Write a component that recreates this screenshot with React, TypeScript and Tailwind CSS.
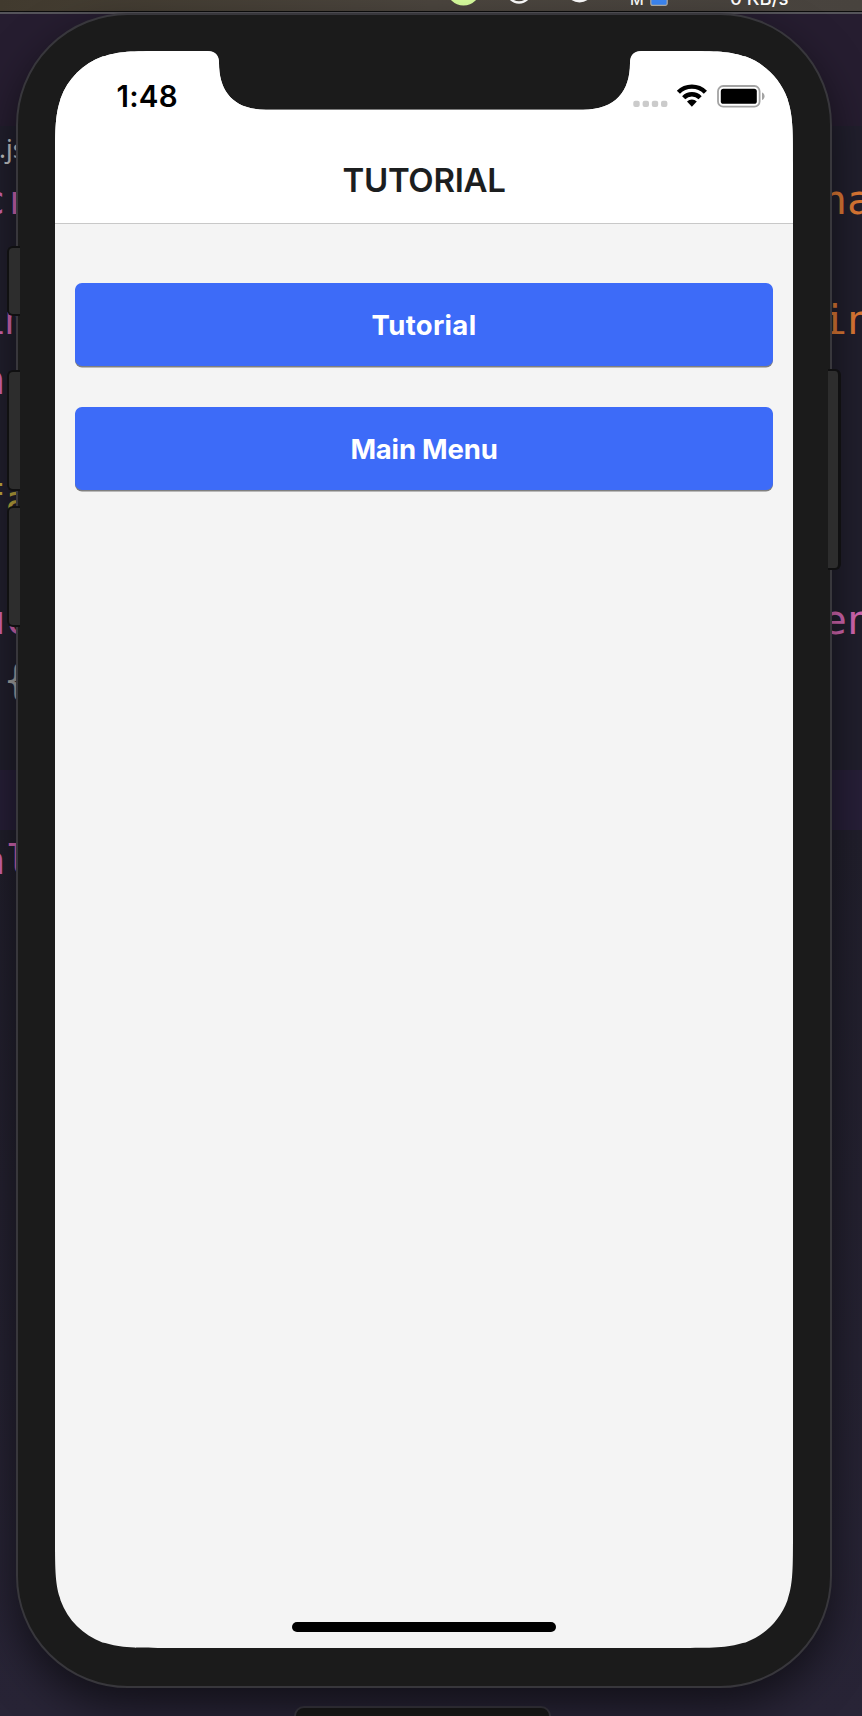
import React from "react";

type CodeLine = { text: string; tone: string };

const leftCode: CodeLine[] = [
  { text: "cr", tone: "text-[#d467b2]" },
  { text: "", tone: "" },
  { text: "im", tone: "text-[#d467b2]" },
  { text: "n", tone: "text-[#d467b2]" },
  { text: "", tone: "" },
  { text: "fa", tone: "text-[#c0a83e]" },
  { text: "", tone: "" },
  { text: "uc", tone: "text-[#d467b2]" },
  { text: " {", tone: "text-[#a5a5a5] tracking-[-2px]" },
  { text: "", tone: "" },
  { text: "", tone: "" },
  { text: "al", tone: "text-[#d467b2]" },
];

const rightCode: CodeLine[] = [
  { text: "na", tone: "text-[#e07a35]" },
  { text: "", tone: "" },
  { text: "in", tone: "text-[#e07a35]" },
  { text: "", tone: "" },
  { text: "", tone: "" },
  { text: "", tone: "" },
  { text: "", tone: "" },
  { text: "en", tone: "text-[#d467b2]" },
];

function CodeColumn({ lines }: { lines: CodeLine[] }) {
  return (
    <div className="flex w-[50px] flex-col">
      {lines.map((line, i) => (
        <div key={i} className={`h-[60px] ${line.tone}`}>
          {line.text}
        </div>
      ))}
    </div>
  );
}

function MenuBar() {
  return (
    <div className="flex h-[14px] shrink-0 items-end overflow-hidden border-b-2 border-[#55545a] bg-linear-to-r from-[#413a2e] via-[#4c463f] to-[#48433e]">
      <div className="flex h-[24px] w-full shrink-0 items-start justify-end border-b border-[#0c0c0c] pr-[73px] font-['Inter',sans-serif] font-medium whitespace-nowrap text-white">
        <svg className="shrink-0" width="190" height="23" viewBox="440 -12 190 23">
          <circle cx="463.5" cy="-11.5" r="17" fill="#d9ff9f" />
          <circle cx="519" cy="-9.5" r="12" fill="none" stroke="#fff" strokeWidth="2.4" />
          <circle cx="579.5" cy="-12" r="14.4" fill="#fff" />
        </svg>
        <span className="w-[20px] text-[15px] leading-[23px]">M</span>
        <svg className="shrink-0" width="80" height="23" viewBox="650 -12 80 23">
          <rect x="650.8" y="-9" width="16.4" height="14.4" rx="2" fill="#3d88f7" stroke="#b4b0a9" strokeWidth="1.2" />
        </svg>
        <span className="w-[59px] text-[18.5px] leading-[20px]">0 KB/s</span>
      </div>
    </div>
  );
}

function Editor() {
  return (
    <div className="flex h-[1716px] flex-col">
      <MenuBar />
      <div className="h-[112px] shrink-0 bg-[#261d30]" />
      <div className="h-[644px] shrink-0 bg-[#211f2d]" />
      <div className="h-[60px] shrink-0 bg-[#271f38]" />
      <div className="flex-1 bg-linear-to-b from-[#211f2c] to-[#282436]" />
    </div>
  );
}

function StatusBar() {
  return (
    <div className="flex h-[90px] items-start justify-between pt-[29px] pr-[28px] pl-[61.5px]">
      <span className="font-['Inter',sans-serif] text-[29.5px] leading-[32px] font-semibold tracking-[0.2px] text-black">
        1:48
      </span>
      <svg width="134" height="26" viewBox="0 0 134 26" className="mt-[4px]">
        <g fill="#cbcbcb">
          <rect x="2.3" y="16.7" width="6.4" height="6.4" rx="2" />
          <rect x="11.6" y="16.7" width="6.4" height="6.4" rx="2" />
          <rect x="20.8" y="16.7" width="6.4" height="6.4" rx="2" />
          <rect x="30" y="16.7" width="6.4" height="6.4" rx="2" />
        </g>
        <g fill="none" stroke="#000" strokeWidth="4.4">
          <path d="M47.4 8.3A18.8 18.8 0 0 1 74.4 8.3" />
          <path d="M52.7 13.8A11.4 11.4 0 0 1 69.1 13.8" />
        </g>
        <path d="M56 17.6A6.8 6.8 0 0 1 65.8 17.6L60.9 22.8Z" fill="#000" />
        <rect x="87" y="2" width="41.6" height="20.6" rx="5.2" fill="none" stroke="#a3a3a3" strokeWidth="1.8" />
        <rect x="89.8" y="4.8" width="36" height="15" rx="2.6" fill="#000" />
        <path d="M131 8.6C134.4 9.5 134.4 15.1 131 16Z" fill="#a3a3a3" />
      </svg>
    </div>
  );
}

function ActionButton({ label, spacing }: { label: string; spacing: string }) {
  return (
    <button
      className={`flex h-[83px] w-full items-center justify-center rounded-[7px] bg-[#3d6bf8] pt-[3px] font-['Inter',sans-serif] text-[27.5px] leading-none font-[650] text-white shadow-[0_1.5px_0_#7f7f7f] ${spacing}`}
    >
      {label}
    </button>
  );
}

function Screen() {
  return (
    <div className="flex h-[1597px] w-[738px] flex-col bg-[#f4f4f4] [clip-path:path('M0_114.6C0_81.6_0_65.1_4.9_50.2L5.6_47.4C12.7_28_28_12.7_47.4_5.6L50.2_4.9C65.1_0_81.6_0_114.6_0H152C160_0_164_4_164_12C164_40_178_58.7_211_58.7H528C561_58.7_575_40_575_12C575_4_579_0_587_0H623.4C656.4_0_672.9_0_687.8_4.9L690.6_5.6C710_12.7_725.3_28_732.4_47.4L733.1_50.2C738_65.1_738_81.6_738_114.6V1482.4C738_1515.4_738_1531.9_733.1_1546.8L732.4_1549.6C725.3_1569_710_1584.3_690.6_1591.4L687.8_1592.1C672.9_1597_656.4_1597_623.4_1597H114.6C81.6_1597_65.1_1597_50.2_1592.1L47.4_1591.4C28_1584.3_12.7_1569_5.6_1549.6L4.9_1546.8C0_1531.9_0_1515.4_0_1482.4Z')]">
      <header className="h-[173px] border-b border-[#c8c8c8] bg-white">
        <StatusBar />
        <h1 className="pt-[19px] text-center font-['Inter',sans-serif] text-[33px] leading-[40px] font-semibold tracking-[-0.3px] text-[#1c1e1f]">
          TUTORIAL
        </h1>
      </header>
      <main className="flex flex-1 flex-col gap-[41px] px-5 pt-[59px]">
        <ActionButton label="Tutorial" spacing="tracking-[0.3px]" />
        <ActionButton label="Main Menu" spacing="tracking-[-0.2px]" />
      </main>
      <div className="mx-auto mb-[16px] h-[10px] w-[264px] rounded-full bg-black" />
    </div>
  );
}

function SideKey({ className }: { className: string }) {
  return <div className={`w-[13px] border-y-2 border-[#101011] bg-[#2d2d2d] ${className}`} />;
}

function Phone() {
  return (
    <div className="flex w-[834px] items-start">
      <div className="z-10 mr-[-4px] flex w-[13px] shrink-0 flex-col pt-[233px]">
        <SideKey className="h-[70px] rounded-l-[6px] border-l-2" />
        <SideKey className="mt-[54px] h-[121px] rounded-l-[6px] border-l-2" />
        <SideKey className="mt-[15px] h-[121px] rounded-l-[6px] border-l-2" />
      </div>
      <div className="h-[1675px] w-[816px] shrink-0 rounded-[112px] border-2 border-[#38373c] bg-[#1b1b1b] px-[37px] py-[36px] shadow-[0_18px_44px_rgba(0,0,0,0.55)]">
        <Screen />
      </div>
      <div className="z-10 ml-[-4px] w-[13px] shrink-0 pt-[356px]">
        <SideKey className="h-[201px] rounded-r-[6px] border-r-[3px]" />
      </div>
    </div>
  );
}

export default function App() {
  return (
    <div className="relative h-[1716px] w-[862px] overflow-hidden bg-[#211f2d]">
      <Editor />
      <span className="absolute top-[132px] left-[-1px] font-['Noto_Sans',sans-serif] text-[26px] leading-[32px] text-[#c4c4c6]">
        .js
      </span>
      <div className="absolute inset-x-0 top-[170px] -mr-[10px] -ml-[19.5px] flex justify-between font-['DejaVu_Sans_Mono',monospace] text-[41.5px] leading-[60px] whitespace-pre">
        <CodeColumn lines={leftCode} />
        <CodeColumn lines={rightCode} />
      </div>
      <div className="absolute inset-x-0 top-[1706px] flex justify-center pr-[17px]">
        <div className="h-[40px] w-[257px] rounded-[10px] border-2 border-[#3b3942] bg-[#1a1a1a]" />
      </div>
      <div className="absolute top-[13px] left-[7px]">
        <Phone />
      </div>
    </div>
  );
}
